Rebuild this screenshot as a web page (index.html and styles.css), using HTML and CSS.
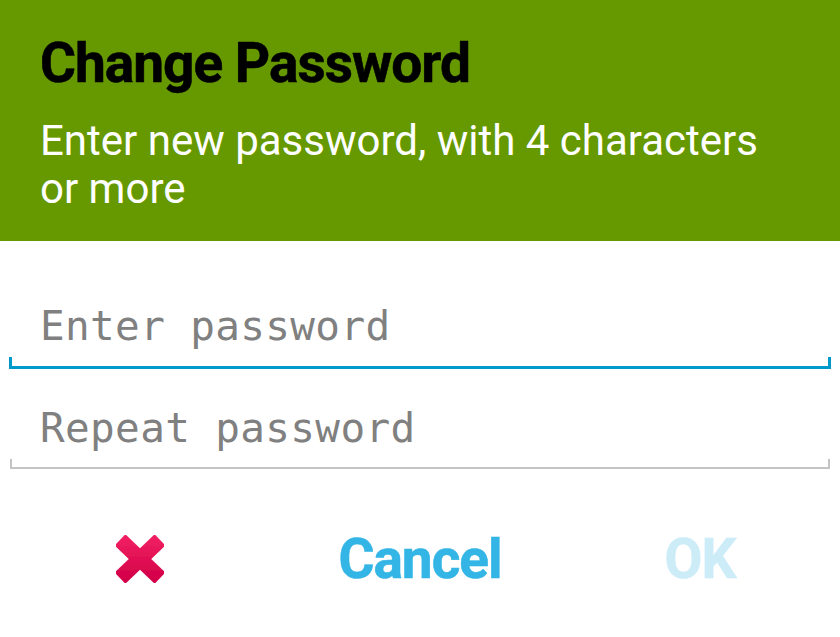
FILE: index.html
```html
<!DOCTYPE html>
<html>
<head>
<meta charset="utf-8">
<link rel="stylesheet" href="styles.css">
</head>
<body>
<div class="dialog">
  <div class="header">
    <div class="title">Change Password</div>
    <div class="subtitle">Enter new password, with 4 characters or more</div>
  </div>
  <div class="fields">
    <div class="field focused">
      <div class="placeholder">Enter password</div>
      <div class="underline"></div>
    </div>
    <div class="field">
      <div class="placeholder">Repeat password</div>
      <div class="underline"></div>
    </div>
  </div>
  <div class="buttons">
    <div class="btn icon-btn">
      <svg width="52" height="50" viewBox="0 0 52 50">
        <defs>
          <linearGradient id="xg" x1="0" y1="0" x2="0" y2="1">
            <stop offset="0" stop-color="#ef1f60"/>
            <stop offset="1" stop-color="#d30049"/>
          </linearGradient>
          <filter id="soft" x="-10%" y="-10%" width="120%" height="120%">
            <feGaussianBlur stdDeviation="0.6"/>
          </filter>
        </defs>
        <g stroke="url(#xg)" stroke-width="15.5" stroke-linecap="butt" filter="url(#soft)">
          <line x1="6" y1="5.8" x2="46" y2="44.2"/>
          <line x1="46" y1="5.8" x2="6" y2="44.2"/>
        </g>
      </svg>
    </div>
    <div class="btn text-btn cancel">Cancel</div>
    <div class="btn text-btn ok">OK</div>
  </div>
</div>
</body>
</html>
```
FILE: styles.css
```css
html, body {
  margin: 0;
  padding: 0;
  background: #ffffff;
}
body {
  width: 840px;
  height: 637px;
  overflow: hidden;
  font-family: Roboto, "Liberation Sans", sans-serif;
}
.dialog {
  display: flex;
  flex-direction: column;
}
.header {
  background: #669900;
  padding: 31px 60px 28px 40px;
  height: 241px;
  box-sizing: border-box;
}
.title {
  font-weight: 700;
  font-size: 55px;
  line-height: 64px;
  letter-spacing: -1px;
  color: #000000;
  -webkit-text-stroke: 0.6px #000000;
}
.subtitle {
  margin-top: 22px;
  font-size: 42px;
  line-height: 48px;
  color: #ffffff;
}
.fields {
  display: flex;
  flex-direction: column;
  padding: 61px 9px 0 9px;
}
.field + .field {
  margin-top: 35px;
}
.placeholder {
  font-family: "DejaVu Sans Mono", "Liberation Mono", monospace;
  font-size: 41px;
  line-height: 48px;
  letter-spacing: 0.35px;
  color: #808080;
  padding-left: 31px;
  white-space: nowrap;
}
.underline {
  margin-top: 7px;
  height: 8px;
  border-left: 2px solid #c4c4c4;
  border-right: 2px solid #c4c4c4;
  border-bottom: 2px solid #c4c4c4;
  margin-left: 1px;
  margin-right: 1px;
}
.focused .underline {
  height: 9px;
  border-left: 3px solid #0099cc;
  border-right: 3px solid #0099cc;
  border-bottom: 3px solid #0099cc;
  margin-left: 0;
  margin-right: 0;
}
.buttons {
  display: grid;
  grid-template-columns: 1fr 1fr 1fr;
  margin-top: 58px;
  height: 64px;
}
.btn {
  display: flex;
  align-items: center;
  justify-content: center;
}
.text-btn {
  font-weight: 700;
  font-size: 55px;
  line-height: 64px;
  letter-spacing: -1px;
}
.cancel {
  color: #33b5e5;
  -webkit-text-stroke: 0.6px #33b5e5;
}
.ok {
  color: #ccecf8;
  -webkit-text-stroke: 0.6px #ccecf8;
}
.icon-btn svg {
  display: block;
}
```
